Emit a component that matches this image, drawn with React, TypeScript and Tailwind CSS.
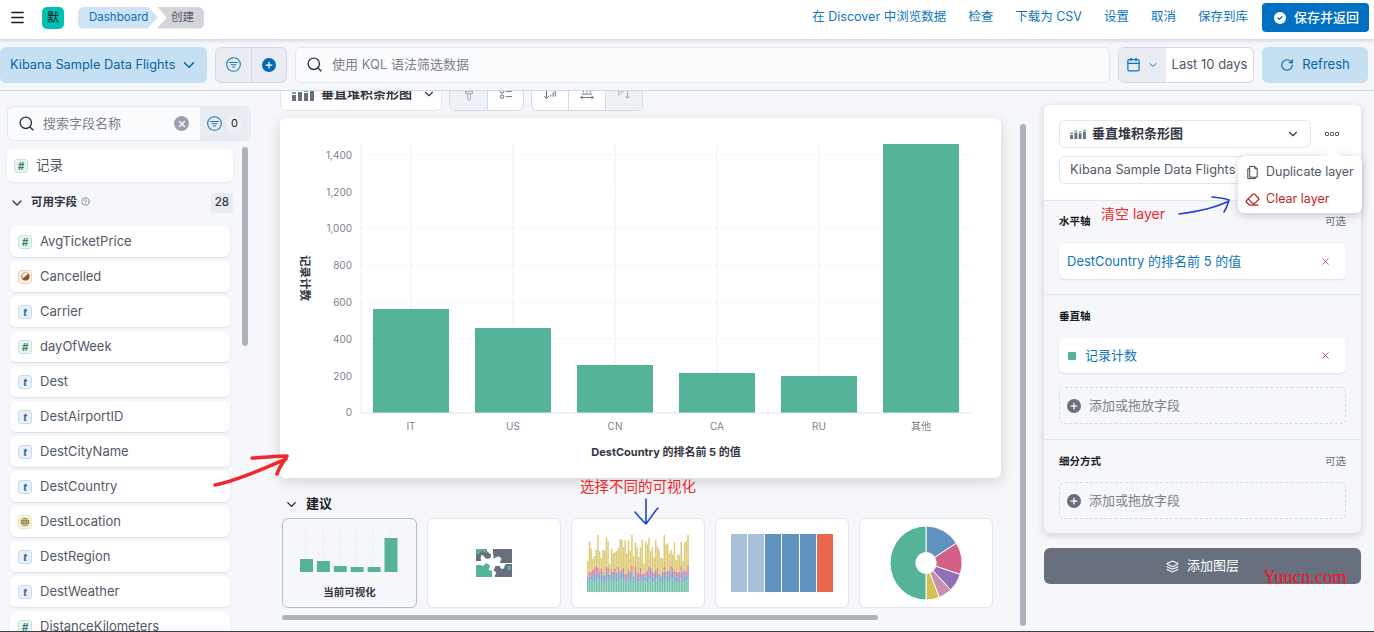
import { ChevronDown, Eraser, Layers, Menu, Plus, RotateCw, Search, X, Calendar, CircleCheck, HelpCircle } from "lucide-react";

const fields = [
  { name: "AvgTicketPrice", type: "num" },
  { name: "Cancelled", type: "bool" },
  { name: "Carrier", type: "text" },
  { name: "dayOfWeek", type: "num" },
  { name: "Dest", type: "text" },
  { name: "DestAirportID", type: "text" },
  { name: "DestCityName", type: "text" },
  { name: "DestCountry", type: "text" },
  { name: "DestLocation", type: "geo" },
  { name: "DestRegion", type: "text" },
  { name: "DestWeather", type: "text" },
  { name: "DistanceKilometers", type: "num" },
];

const yTicks = [
  { label: "1,400", y: 155 },
  { label: "1,200", y: 192 },
  { label: "1,000", y: 228 },
  { label: "800", y: 265 },
  { label: "600", y: 302 },
  { label: "400", y: 339 },
  { label: "200", y: 376 },
  { label: "0", y: 412 },
];

const bars = [
  { label: "IT", x: 373, top: 309 },
  { label: "US", x: 475, top: 328 },
  { label: "CN", x: 577, top: 365 },
  { label: "CA", x: 679, top: 373 },
  { label: "RU", x: 781, top: 376 },
  { label: "其他", x: 883, top: 144 },
];

function FilterCircle({ className }: { className?: string }) {
  return (
    <svg viewBox="0 0 16 16" className={className} fill="none" stroke="currentColor" strokeWidth="1.1">
      <circle cx="8" cy="8" r="7.3" />
      <path d="M3.8 5.8h8.4M5.4 8.2h5.2M6.9 10.6h2.2" strokeLinecap="round" />
    </svg>
  );
}

function StackedBarIcon({ className }: { className?: string }) {
  return (
    <svg viewBox="0 0 22 14" className={className}>
      <path fill="#54b399" d="M0 5h4v2H0zM6 2h4v2H6zM12 3h4v2h-4zM18 1h4v2h-4z" />
      <path fill="#69707d" d="M0 8h4v6H0zM6 5h4v9H6zM12 6h4v8h-4zM18 4h4v10h-4z" />
    </svg>
  );
}

function FieldToken({ type }: { type: string }) {
  if (type === "num") {
    return <span className="flex h-[14px] w-[14px] shrink-0 items-center justify-center rounded-[3px] border border-[#c4e5d9] bg-[#e8f5f0] text-[10px] font-bold italic leading-none text-[#3a7d68]">#</span>;
  }
  if (type === "text") {
    return <span className="flex h-[14px] w-[14px] shrink-0 items-center justify-center rounded-[3px] border border-[#c6dcee] bg-[#e8f1f9] text-[10px] font-bold italic leading-none text-[#2b6592]">t</span>;
  }
  if (type === "bool") {
    return (
      <span className="flex h-[14px] w-[14px] shrink-0 items-center justify-center rounded-[3px] border border-[#f5d3bb] bg-[#fbeee5]">
        <svg viewBox="0 0 10 10" className="h-[9px] w-[9px]">
          <circle cx="5" cy="5" r="4.5" fill="#8f5424" />
          <path d="M1.5 7.5 8 2.2 A4.5 4.5 0 0 0 1.5 2.5z" fill="#fbeee5" />
        </svg>
      </span>
    );
  }
  return (
    <span className="flex h-[14px] w-[14px] shrink-0 items-center justify-center rounded-[3px] border border-[#f1e6bf] bg-[#f9f4e0]">
      <svg viewBox="0 0 10 10" className="h-[10px] w-[10px]" fill="#7d6a1d" stroke="#f9f4e0" strokeWidth="0.5">
        <circle cx="5" cy="5" r="4.5" />
        <path d="M0.5 5h9M5 0.5v9M1.5 2.6h7M1.5 7.4h7" fill="none" />
        <ellipse cx="5" cy="5" rx="2.2" ry="4.5" fill="none" />
      </svg>
    </span>
  );
}

function BarChart() {
  return (
    <svg viewBox="280 118 721 360" className="block h-[360px] w-[721px]">
      {yTicks.map((t) => (
        <g key={t.label}>
          <line x1={361} x2={971} y1={t.y} y2={t.y} stroke="#eef0f3" strokeDasharray="4 4" />
          <text x={352} y={t.y + 3.5} textAnchor="end" fontSize={10} fill="#7d828c">{t.label}</text>
        </g>
      ))}
      {[361, 411, 513, 615, 717, 819, 921].map((x) => (
        <line key={x} x1={x} x2={x} y1={144} y2={413} stroke="#eef0f3" />
      ))}
      {bars.map((b) => (
        <g key={b.label}>
          <rect x={b.x} y={b.top} width={76} height={413 - b.top} fill="#54b399" />
          <text x={b.x + 38} y={430} textAnchor="middle" fontSize={10} fill="#7d828c">{b.label}</text>
        </g>
      ))}
      <line x1={361} x2={971} y1={413} y2={413} stroke="#e4e7ec" />
      <text x={666} y={456} textAnchor="middle" fontSize={11} fontWeight={700} fill="#343741">DestCountry 的排名前 5 的值</text>
      <text x={0} y={0} transform="translate(301 278) rotate(90)" textAnchor="middle" fontSize={11.5} fontWeight={700} fill="#343741">记录计数</text>
    </svg>
  );
}

function CurrentThumb() {
  const h = [13, 11, 6, 5, 5, 34];
  return (
    <svg viewBox="0 0 135 58" className="h-[58px] w-[135px]">
      {[24, 41, 58, 74, 91, 108].map((x) => (
        <line key={x} x1={x} x2={x} y1={6} y2={50} stroke="#eceff3" />
      ))}
      {[17, 32].map((y) => (
        <line key={y} x1={16} x2={122} y1={y} y2={y} stroke="#eceff3" strokeDasharray="3 2" />
      ))}
      {h.map((v, i) => (
        <rect key={i} x={18 + i * 16.9} y={50 - v} width={13} height={v} fill="#54b399" />
      ))}
    </svg>
  );
}

function PuzzleThumb() {
  return (
    <svg viewBox="0 0 36 28" className="h-[28px] w-[36px]">
      <path fill="#69707d" d="M0 0h11c-1 2 1 3 2 4 2 1 3 3 1 5-1 1-4 1-5 0-1-1-1-3-3-3-2 1-1 4-1 6H0z" />
      <path fill="#54b399" d="M0 0h10c-.5 1.5.5 2.5 1.5 3.5-1 1-2 .5-3-.5C7 1.500 4 2 4 5H0z" />
      <path fill="#69707d" d="M17 0h19v14H24c0-2 2-3 1-5-1-1-3-2-4-1-2 0-2 2-4 1 2-2-1-4 0-5z" />
      <path fill="#54b399" d="M0 16h5c1 2 3 1 4-1 2-1 4 0 5 2 0 2-2 2-1 4 1 1 2 1 3 0v7H0z" />
      <path fill="#69707d" d="M19 17h5c0 2 1 3 3 3 2-1 1-4 3-5h6v13H19c-1-2 2-3 1-5-1-1-3-1-2-3 1-1 1-2 1-3z" />
      <circle cx="33" cy="19" r="2.200" fill="#54b399" />
    </svg>
  );
}

function StackedThumb() {
  const seed = (i: number, k: number) => {
    const v = Math.sin(i * 12.9898 + k * 78.233) * 43758.5453;
    return v - Math.floor(v);
  };
  const items = Array.from({ length: 60 }, (_, i) => i);
  return (
    <svg viewBox="0 0 102 57" className="h-[57px] w-[102px] opacity-80" preserveAspectRatio="none">
      {items.map((i) => {
        const x = i * 1.7;
        const g = 8 + seed(i, 1) * 6;
        const b = 3 + seed(i, 2) * 6;
        const p = 2 + seed(i, 3) * 5;
        const y = 10 + seed(i, 4) * 25;
        return (
          <g key={i}>
            <rect x={x} y={57 - g} width={1.5} height={g} fill="#54b399" />
            <rect x={x} y={57 - g - b} width={1.5} height={b} fill="#6092c0" />
            <rect x={x} y={57 - g - b - p} width={1.5} height={p} fill="#d36086" />
            <rect x={x} y={57 - g - b - p - y} width={1.5} height={y} fill="#d6bf57" />
          </g>
        );
      })}
    </svg>
  );
}

function TreemapThumb() {
  const cols = ["#a8bfda", "#a8bfda", "#6092c0", "#6092c0", "#6092c0", "#e7664c"];
  return (
    <div className="flex h-[58px] w-[103px] gap-px">
      {cols.map((c, i) => (
        <div key={i} className="flex-1" style={{ backgroundColor: c }} />
      ))}
    </div>
  );
}

function DonutThumb() {
  const slices = [
    { v: 16, c: "#6092c0" },
    { v: 14, c: "#d36086" },
    { v: 8, c: "#9170b8" },
    { v: 6, c: "#ca8eae" },
    { v: 6, c: "#d6bf57" },
    { v: 50, c: "#54b399" },
  ];
  let a = 0;
  return (
    <svg viewBox="-30 -30 60 60" className="h-[74px] w-[72px]" preserveAspectRatio="none">
      {slices.map((s, i) => {
        const a0 = (a / 100) * Math.PI * 2;
        a += s.v;
        const a1 = (a / 100) * Math.PI * 2;
        const r = 30;
        const r2 = 8.5;
        const p = (rad: number, t: number) => `${rad * Math.sin(t)} ${-rad * Math.cos(t)}`;
        return (
          <path
            key={i}
            fill={s.c}
            stroke="#fff"
            strokeWidth="0.8"
            d={`M${p(r2, a0)}L${p(r, a0)}A${r} ${r} 0 0 1 ${p(r, a1)}L${p(r2, a1)}A${r2} ${r2} 0 0 0 ${p(r2, a0)}Z`}
          />
        );
      })}
    </svg>
  );
}

function AddField() {
  return (
    <div className="flex h-[37px] items-center gap-[8px] rounded-md border border-dashed border-[#d3dae6] px-[7px] text-[13px] text-[#7d828c]">
      <span className="flex h-[14px] w-[14px] items-center justify-center rounded-full bg-[#69707d]">
        <Plus size={10} strokeWidth={3} className="text-white" />
      </span>
      添加或拖放字段
    </div>
  );
}

function Annotations() {
  return (
    <>
      <svg viewBox="0 0 1374 632" className="pointer-events-none absolute left-0 top-0 h-[632px] w-[1374px]" fill="none" strokeLinecap="round" strokeLinejoin="round">
        <path d="M215 485C235 481 258 471 286 459M252 458C262 458 275 456 287 456C284 462 279 467 277 474" stroke="#f0282d" strokeWidth="3.5" />
        <path d="M646 499V524M635 512C639 517 643 521 646 524C650 519 654 512 658 508" stroke="#2444c8" strokeWidth="1.6" />
        <path d="M1179 214C1195 212 1215 208 1229 201M1212 197C1218 198 1225 198 1229 200C1228 204 1226 209 1224 212" stroke="#2444c8" strokeWidth="1.6" />
      </svg>
      <span className="absolute left-[1101px] top-[205px] text-[14px] leading-[18px] text-[#f0282d]">清空 layer</span>
      <span className="absolute left-[580px] top-[478px] text-[14.500px] leading-[18px] text-[#f0282d]">选择不同的可视化</span>
      <span className="absolute left-[1263px] top-[567px] font-['Liberation_Serif','Noto_Sans_CJK_SC',serif] text-[18.500px] leading-[20px] text-[#f5122a]">Yuucn.com</span>
    </>
  );
}

export default function App() {
  return (
    <div className="relative flex h-[632px] w-[1374px] flex-col overflow-hidden bg-[#f5f7fb] font-['Inter','Noto_Sans_CJK_SC',sans-serif] text-[#343741]">
      <header className="relative z-10 flex h-[39px] shrink-0 items-center bg-white pb-[4px] pl-[9px] pr-[5px] shadow-[0_1px_4px_rgba(0,0,0,0.2)]">
        <Menu size={17} className="text-[#1a1c21]" />
        <div className="ml-[16px] flex h-[22px] w-[22px] items-center justify-center rounded-[5px] bg-[#00bfb3] text-[12px] text-[#1a1c21]">默</div>
        <nav className="ml-[14px] flex h-[22px] text-[11.5px]">
          <span className="flex w-[80px] items-center rounded-l-md bg-[#cce4f5] pl-[11px] text-[#0f6eb3] [clip-path:polygon(0_0,87%_0,100%_50%,87%_100%,0_100%)]">Dashboard</span>
          <span className="-ml-[1px] flex w-[47px] items-center rounded-r-md bg-[#d3d5d8] pl-[14px] text-[#535966] [clip-path:polygon(0_0,100%_0,100%_100%,0_100%,21%_50%)]">创建</span>
        </nav>
        <div className="ml-auto flex items-center gap-[22px] text-[12.5px] text-[#0f76bd]">
          <span>在 Discover 中浏览数据</span>
          <span>检查</span>
          <span>下载为 CSV</span>
          <span>设置</span>
          <span>取消</span>
          <span>保存到库</span>
          <button className="-ml-[8px] flex h-[29px] w-[107px] items-center justify-center gap-[6px] rounded-[4px] bg-[#0071c2] text-[13px] font-medium text-white">
            <CircleCheck size={16} className="fill-white text-[#0071c2]" />
            保存并返回
          </button>
        </div>
      </header>

      <div className="flex h-[52px] shrink-0 items-center border-b border-[#d3dae6] bg-[#f5f7fb] pr-[6px] text-[13px]">
        <button className="flex h-[36px] w-[207px] items-center justify-between whitespace-nowrap rounded-md bg-[#c5dff3] pl-[10px] pr-[9px] text-[12.800px] text-[#0a63a3]">
          Kibana Sample Data Flights
          <ChevronDown size={18} className="shrink-0" />
        </button>
        <div className="ml-[8px] flex h-[36px] w-[72px] rounded-md border border-[#d3dae6] bg-[#e9edf3]">
          <span className="flex flex-1 items-center justify-center border-r border-[#d3dae6] text-[#0f76bd]">
            <FilterCircle className="h-[15px] w-[15px]" />
          </span>
          <span className="flex flex-1 items-center justify-center">
            <span className="flex h-[14px] w-[14px] items-center justify-center rounded-full bg-[#006bb4]">
              <Plus size={10} strokeWidth={3} className="text-white" />
            </span>
          </span>
        </div>
        <div className="ml-[8px] flex h-[36px] flex-1 items-center gap-[9px] rounded-md border border-[#e2e6ee] bg-[#fbfcfd] pl-[10px] text-[#7d828c]">
          <Search size={17} className="text-[#343741]" />
          使用 KQL 语法筛选数据
        </div>
        <div className="ml-[8px] flex h-[36px] w-[136px] overflow-hidden rounded-md border border-[#d3dae6] bg-white">
          <span className="flex w-[47px] items-center justify-center gap-[6px] bg-[#e9edf3] text-[#0f76bd]">
            <Calendar size={15} />
            <ChevronDown size={12} />
          </span>
          <span className="flex flex-1 items-center justify-center text-[#535966]">Last 10 days</span>
        </div>
        <button className="ml-[8px] flex h-[36px] w-[106px] items-center justify-center gap-[8px] rounded-md bg-[#c5dff3] text-[#0a63a3]">
          <RotateCw size={14} />
          Refresh
        </button>
      </div>

      <div className="flex min-h-0 flex-1">
        <aside className="relative w-[262px] shrink-0 overflow-hidden pt-[15px]">
          <div className="ml-[7px] flex h-[35px] w-[244px] overflow-hidden rounded-md border border-[#e2e6ee] bg-[#fbfcfd] text-[13px]">
            <div className="flex flex-1 items-center pl-[10px] text-[#7d828c]">
              <Search size={17} className="text-[#343741]" />
              <span className="ml-[8px]">搜索字段名称</span>
              <span className="ml-auto mr-[11px] flex h-[15px] w-[15px] items-center justify-center rounded-full bg-[#98a2b3]">
                <X size={10} strokeWidth={3} className="text-white" />
              </span>
            </div>
            <div className="flex w-[50px] items-center gap-[5px] bg-[#e9edf3] pl-[7px] text-[#0f76bd]">
              <FilterCircle className="h-[15px] w-[15px]" />
              <span className="flex h-[14px] w-[15px] items-center justify-center rounded-[3px] bg-[#eef1f6] text-[11px] text-[#1a1c21]">0</span>
            </div>
          </div>
          <div className="ml-[7px] mt-[8px] flex h-[33px] w-[226px] items-center gap-[8px] rounded-md bg-white pl-[7px] text-[13.500px] text-[#535966] shadow-[0_1px_2px_rgba(0,0,0,0.08)]">
            <FieldToken type="num" />
            记录
          </div>
          <div className="ml-[9px] mt-[11px] flex h-[20px] w-[224px] items-center text-[11.5px] font-semibold text-[#343741]">
            <ChevronDown size={16} />
            <span className="ml-[6px]">可用字段</span>
            <HelpCircle size={9} className="ml-[4px] -mt-[3px] text-[#69707d]" />
            <span className="ml-auto rounded-[3px] bg-[#e9edf3] px-[4px] py-[1px] text-[11.500px] font-medium">28</span>
          </div>
          <ul className="ml-[10px] mt-[13px] flex w-[220px] flex-col gap-[4px]">
            {fields.map((f) => (
              <li key={f.name} className="flex h-[31px] shrink-0 items-center gap-[8px] rounded-md bg-white pl-[8px] text-[13px] text-[#535966] shadow-[0_1px_2px_rgba(0,0,0,0.1)]">
                <FieldToken type={f.type} />
                {f.name}
              </li>
            ))}
          </ul>
          <div className="absolute left-[242px] top-[56px] h-[199px] w-[6px] rounded-full bg-[#adb3bd]" />
        </aside>

        <main className="relative min-w-0 flex-1 overflow-hidden pl-[18px]">
          <div className="-mt-[14px] flex h-[34px] items-stretch text-[13px]">
            <div className="flex w-[162px] items-center gap-[7px] rounded-md border border-[#e2e6ee] bg-white pl-[11px] font-semibold text-[#343741]">
              <StackedBarIcon className="h-[14px] w-[22px]" />
              垂直堆积条形图
              <ChevronDown size={14} className="ml-[3px]" />
            </div>
            <div className="ml-[7px] flex w-[75px] overflow-hidden rounded-md border border-[#d3dae6] bg-white">
              <span className="flex w-[38px] items-center justify-center border-r border-[#d3dae6] bg-[#eef1f6] text-[#98a2b3]">
                <svg viewBox="0 0 16 16" className="h-[14px] w-[14px]" fill="none" stroke="currentColor"><path d="M4 1.500h8v6H4zM4 5h8M6 7.500h4l-.5 3v3a1.500 1.500 0 0 1-3 0v-3z" /></svg>
              </span>
              <span className="flex flex-1 items-center justify-center text-[#535966]">
                <svg viewBox="0 0 16 16" className="h-[14px] w-[14px]" fill="none" stroke="currentColor"><circle cx="3.500" cy="5" r="2" /><circle cx="3.500" cy="11" r="2" /><path d="M8 5h7M8 11h7" /></svg>
              </span>
            </div>
            <div className="ml-[7px] flex w-[112px] overflow-hidden rounded-md border border-[#d3dae6] bg-white">
              <span className="flex flex-1 items-center justify-center border-r border-[#d3dae6] text-[#535966]">
                <svg viewBox="0 0 16 16" className="h-[14px] w-[14px]" fill="none" stroke="currentColor"><path d="M4 2v11M1.500 10.500 4 13l2.500-2.500M9 9v2M11.500 6v5M14 3v8" /></svg>
              </span>
              <span className="flex flex-1 items-center justify-center border-r border-[#d3dae6] text-[#535966]">
                <svg viewBox="0 0 16 16" className="h-[14px] w-[14px]" fill="none" stroke="currentColor"><path d="M4 2v4M8 2v4M12 2v4M2 8h12M1 12h14M1 12l2-2M1 12l2 2M15 12l-2-2M15 12l-2 2" /></svg>
              </span>
              <span className="flex flex-1 items-center justify-center bg-[#eef1f6] text-[#98a2b3]">
                <svg viewBox="0 0 16 16" className="h-[14px] w-[14px]" fill="none" stroke="currentColor"><path d="M12 2v11M9.500 10.500 12 13l2.500-2.500M2 3v7M4.500 3v5M7 3v3" /></svg>
              </span>
            </div>
          </div>

          <div className="mt-[7px] h-[360px] w-[721px] rounded-md bg-white shadow-[0_4px_14px_rgba(0,0,0,0.14)]">
            <BarChart />
          </div>

          <div className="ml-[4px] mt-[17px] flex h-[18px] items-center gap-[7px] text-[13px] font-semibold text-[#1a1c21]">
            <ChevronDown size={15} />
            建议
          </div>
          <div className="ml-[2px] mt-[5px] flex gap-[10px]">
            <div className="flex h-[90px] w-[135px] flex-col items-center rounded-md border border-[#b7bdc8] bg-[#f5f7fb] pt-[3px]">
              <CurrentThumb />
              <span className="mt-[5px] text-[10.500px] font-semibold text-[#343741]">当前可视化</span>
            </div>
            <div className="flex h-[90px] w-[134px] items-center justify-center rounded-md border border-[#e2e6ee] bg-white"><PuzzleThumb /></div>
            <div className="flex h-[90px] w-[134px] items-center justify-center rounded-md border border-[#e2e6ee] bg-white"><StackedThumb /></div>
            <div className="flex h-[90px] w-[134px] items-center justify-center rounded-md border border-[#e2e6ee] bg-white"><TreemapThumb /></div>
            <div className="flex h-[90px] w-[134px] items-center justify-center rounded-md border border-[#e2e6ee] bg-white"><DonutThumb /></div>
          </div>
          <div className="ml-[2px] mt-[7px] h-[5px] w-[596px] rounded-full bg-[#adb3bd]" />
          <div className="absolute left-[758px] top-[33px] h-[502px] w-[6px] rounded-full bg-[#adb3bd]" />
        </main>

        <aside className="w-[342px] shrink-0 pl-[12px] pr-[13px] pt-[14px]">
          <div className="relative h-[428px] w-[317px] rounded-md bg-[#f5f7fb] shadow-[0_2px_8px_rgba(0,0,0,0.16)]">
            <div className="h-[95px] rounded-t-md bg-white px-[15px] pt-[15px]">
              <div className="flex items-center">
                <div className="flex h-[28px] w-[252px] items-center rounded-md border border-[#e2e6ee] bg-white pl-[10px] pr-[10px] text-[13px] font-semibold">
                  <StackedBarIcon className="h-[10px] w-[16px]" />
                  <span className="ml-[6px]">垂直堆积条形图</span>
                  <ChevronDown size={14} className="ml-auto" />
                </div>
                <span className="ml-[14px] flex gap-[1px]">
                  <i className="h-[4px] w-[4px] rounded-[1px] border border-[#535966]" />
                  <i className="h-[4px] w-[4px] rounded-[1px] border border-[#535966]" />
                  <i className="h-[4px] w-[4px] rounded-[1px] border border-[#535966]" />
                </span>
              </div>
              <div className="mt-[8px] flex h-[28px] w-[288px] items-center rounded-md border border-[#e2e6ee] pl-[10px] text-[12.800px] text-[#535966]">Kibana Sample Data Flights</div>
            </div>
            <section className="h-[94px] border-t border-[#e2e6ee] px-[15px] pt-[13px]">
              <div className="flex justify-between text-[10.500px] leading-[16px]">
                <span className="font-semibold text-[#1a1c21]">水平轴</span>
                <span className="text-[#69707d]">可选</span>
              </div>
              <div className="mt-[14px] flex h-[35px] items-center justify-between rounded-md bg-white pl-[8px] pr-[15px] text-[13px] text-[#0f76bd] shadow-[0_1px_2px_rgba(0,0,0,0.1)]">
                DestCountry 的排名前 5 的值
                <X size={11} className="text-[#c94a4a]" />
              </div>
            </section>
            <section className="h-[145px] border-t border-[#e2e6ee] px-[15px] pt-[14px]">
              <div className="text-[10.500px] font-semibold leading-[16px] text-[#1a1c21]">垂直轴</div>
              <div className="mt-[13px] flex h-[35px] items-center rounded-md bg-white pl-[9px] pr-[15px] text-[13px] text-[#0f76bd] shadow-[0_1px_2px_rgba(0,0,0,0.1)]">
                <i className="h-[8px] w-[8px] rounded-[1px] bg-[#54b399]" />
                <span className="ml-[9px]">记录计数</span>
                <X size={11} className="ml-auto text-[#c94a4a]" />
              </div>
              <div className="mt-[14px]"><AddField /></div>
            </section>
            <section className="border-t border-[#e2e6ee] px-[15px] pt-[14px]">
              <div className="flex justify-between text-[10.500px] leading-[16px]">
                <span className="font-semibold text-[#1a1c21]">细分方式</span>
                <span className="text-[#69707d]">可选</span>
              </div>
              <div className="mt-[12px]"><AddField /></div>
            </section>

            <div className="absolute left-[194px] top-[51px] z-10 h-[57px] w-[124px] rounded-md bg-white py-[5px] pl-[7px] text-[12.500px] shadow-[0_2px_10px_rgba(0,0,0,0.2)]">
              <span className="absolute -top-[5px] left-[90px] h-[10px] w-[10px] rotate-45 bg-white" />
              <div className="flex h-[23px] items-center gap-[6px] text-[#535966]">
                <svg viewBox="0 0 16 16" className="h-[15px] w-[15px] text-[#343741]" fill="none" stroke="currentColor">
                  <path d="M5 1.500h5.500L13 4v9H5zM10.500 1.500V4H13M5 4H3v10.500h8V13" />
                </svg>
                Duplicate layer
              </div>
              <div className="mt-[6px] flex h-[19px] items-center gap-[6px] text-[#bd271e]">
                <Eraser size={15} />
                Clear layer
              </div>
            </div>
          </div>
          <button className="mt-[15px] flex h-[36px] w-[317px] items-center justify-center gap-[8px] rounded-md bg-[#69707d] text-[13px] text-white">
            <Layers size={13} />
            添加图层
          </button>
        </aside>
      </div>
      <div className="h-px shrink-0 bg-[#3b4048]" />
      <Annotations />
    </div>
  );
}
